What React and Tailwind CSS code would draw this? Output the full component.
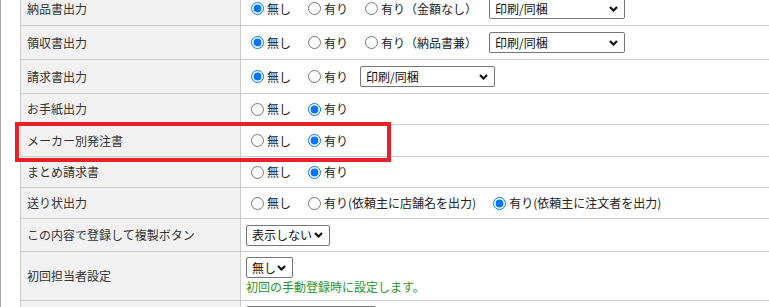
import React from 'react';

const Chevron = () => (
    <svg width="9" height="6" viewBox="0 0 9 6" className="shrink-0">
        <path d="M1 1 L4.5 4.5 L8 1" fill="none" stroke="#111" strokeWidth="2.2" />
    </svg>
);

const FakeSelect = ({ value, width }) => (
    <div
        className="flex items-center justify-between h-[21px] border border-[#767676] rounded-[2px] bg-white pl-[5px] pr-[6px] text-[#111] shrink-0"
        style={{ width }}
    >
        <span className="leading-none">{value}</span>
        <Chevron />
    </div>
);

const Radio = ({ name, label, checked }) => (
    <label className="flex items-center mr-[12px] whitespace-nowrap">
        <input
            type="radio"
            name={name}
            defaultChecked={checked}
            className="w-[13px] h-[13px] ml-[5px] mr-[3px]"
        />
        <span>{label}</span>
    </label>
);

const rows = [
    {
        label: '納品書出力', h: 'h-[33px]',
        radios: ['無し', '有り', '有り（金額なし）'], checked: 0, select: { value: '印刷/同梱', width: 136 },
    },
    {
        label: '領収書出力', h: 'h-[33px]',
        radios: ['無し', '有り', '有り（納品書兼）'], checked: 0, select: { value: '印刷/同梱', width: 136 },
    },
    {
        label: '請求書出力', h: 'h-[33px]',
        radios: ['無し', '有り'], checked: 0, select: { value: '印刷/同梱', width: 135 },
    },
    { label: 'お手紙出力', h: 'h-[30px]', radios: ['無し', '有り'], checked: 1 },
    { label: 'メーカー別発注書', h: 'h-[31px]', radios: ['無し', '有り'], checked: 1 },
    { label: 'まとめ請求書', h: 'h-[30px]', radios: ['無し', '有り'], checked: 1 },
    {
        label: '送り状出力', h: 'h-[30px]',
        radios: ['無し', '有り(依頼主に店舗名を出力)', '有り(依頼主に注文者を出力)'], checked: 2,
    },
];

export default function App() {
    return (
        <div
            className="relative flex w-[769px] h-[307px] overflow-hidden bg-white text-[12px] text-[#333]"
            style={{ fontFamily: '"Noto Sans CJK JP", "Noto Sans", sans-serif' }}
        >
            {/* frame edge */}
            <div className="w-px shrink-0 bg-[#a8a8a8]" />

            {/* settings table */}
            <div className="ml-[19px] -mt-[9px] w-[800px] border-l border-t border-[#cccccc]">
                {rows.map((row, i) => (
                    <div key={i} className="grid grid-cols-[220px_1fr] border-b border-[#cccccc]">
                        <div className={`${row.h} flex items-center pl-[6px] bg-[#f2f2f2] border-r border-[#cccccc]`}>
                            {row.label}
                        </div>
                        <div className="flex items-center pl-[5px] text-[#222]">
                            {row.radios.map((r, j) => (
                                <Radio key={j} name={`r${i}`} label={r} checked={row.checked === j} />
                            ))}
                            {row.select && <FakeSelect value={row.select.value} width={row.select.width} />}
                        </div>
                    </div>
                ))}

                <div className="grid grid-cols-[220px_1fr] border-b border-[#cccccc]">
                    <div className="h-[32px] flex items-center pl-[6px] bg-[#f2f2f2] border-r border-[#cccccc]">
                        この内容で登録して複製ボタン
                    </div>
                    <div className="flex items-center pl-[5px] text-[#222]">
                        <FakeSelect value="表示しない" width={84} />
                    </div>
                </div>

                <div className="grid grid-cols-[220px_1fr] border-b border-[#cccccc]">
                    <div className="h-[48px] flex items-center pl-[6px] bg-[#f2f2f2] border-r border-[#cccccc]">
                        初回担当者設定
                    </div>
                    <div className="flex flex-col justify-start pt-[5px] pl-[5px] text-[#222]">
                        <FakeSelect value="無し" width={47} />
                        <p className="text-[#2d962d] leading-[17px]">初回の手動登録時に設定します。</p>
                    </div>
                </div>

                <div className="grid grid-cols-[220px_1fr]">
                    <div className="h-[33px] bg-[#f2f2f2] border-r border-[#cccccc]" />
                    <div className="pt-[5px] pl-[5px]">
                        <FakeSelect value="" width={130} />
                    </div>
                </div>
            </div>

            {/* highlight annotation */}
            <div className="absolute left-[15px] top-[122px] w-[376px] h-[40px] border-4 border-[#e8202a] pointer-events-none" />
        </div>
    );
}
